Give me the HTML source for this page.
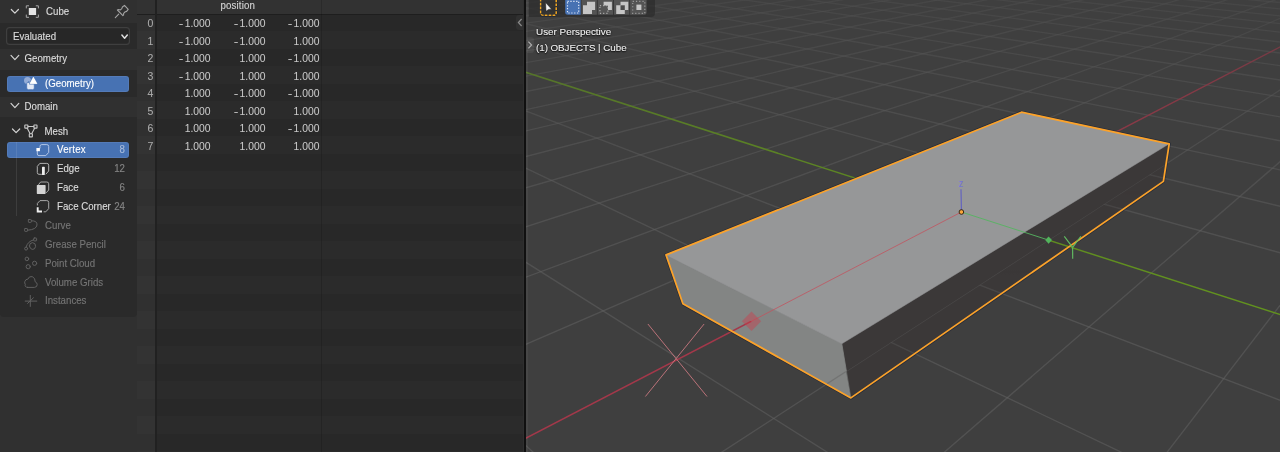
<!DOCTYPE html>
<html><head><meta charset="utf-8"><title>Blender Spreadsheet</title>
<style>
*{box-sizing:border-box;margin:0;padding:0}
html,body{width:1280px;height:452px;overflow:hidden;background:#303030}
body{position:relative;font-family:"Liberation Sans",sans-serif;font-size:9.7px;color:#dddddd;-webkit-font-smoothing:antialiased}
.abs{position:absolute}
.side{will-change:transform;position:absolute;left:0;top:0;width:137px;height:452px;background:#303030}
.pc{position:absolute;left:0;width:137px;background:#2a2a2a}
.t{position:absolute;white-space:nowrap;line-height:12px;height:12px;-webkit-text-stroke:.12px;transform:scaleY(1.06);transform-origin:0 9.2px}
.btn{position:absolute;left:7px;width:122px;height:16px;background:#4772b3;border-radius:3px;box-shadow:inset 0 0 0 1px rgba(255,255,255,.07)}
.dd{position:absolute;left:6px;top:27.3px;width:124px;height:18px;background:#272727;box-shadow:inset 0 0 0 1.2px #3f3f3f;border-radius:3.5px}
.dim{color:#757575}
.num{color:#858585}
svg{position:absolute;overflow:visible}
.sheet{will-change:transform;position:absolute;left:137px;top:0;width:388px;height:452px;background:#282828}
.row{position:absolute;left:0;width:388px;height:17.5px}
.idx{position:absolute;left:0;top:0;width:19.5px;height:452px;background:rgba(255,255,255,.04)}
.cell{position:absolute;text-align:right;white-space:nowrap;line-height:12px;color:#cacaca;font-size:10.3px;-webkit-text-stroke:.05px}
.m{display:inline-block;transform:scaleX(1.35);transform-origin:100% 50%;margin-right:.9px}
.vp{left:526px;top:0;overflow:hidden}
.vt{transform:none;will-change:transform;color:#f2f2f2;font-size:9.9px;text-shadow:0 0 1.5px #000,0 .5px 1.5px rgba(0,0,0,.9)}
</style></head><body>
<!-- SIDEBAR -->
<div class="side">
 <div class="pc" style="top:23px;height:26px"></div>
 <div class="pc" style="top:70px;height:26.5px"></div>
 <div class="pc" style="top:116.5px;height:200.5px;border-radius:0 0 4px 4px"></div>
 <!-- header -->
 <div class="t" style="left:46px;top:5.8px">Cube</div>
 <div class="dd"></div>
 <div class="t" style="left:13px;top:31.0px">Evaluated</div>
 <div class="t" style="left:24.5px;top:52.8px">Geometry</div>
 <div class="btn" style="top:75.5px"></div>
 <div class="t" style="left:45px;top:77.9px;color:#fff">(Geometry)</div>
 <div class="t" style="left:24.5px;top:100.8px">Domain</div>
 <div class="t" style="left:44.5px;top:125.6px">Mesh</div>
 <div class="btn" style="top:142px"></div>
 <div class="abs" style="left:15.8px;top:142px;width:1px;height:74px;background:rgba(255,255,255,.09)"></div>
 <div class="t" style="left:57px;top:144.4px;color:#fff;letter-spacing:.25px">Vertex</div>
 <div class="t" style="left:57px;top:163.2px">Edge</div>
 <div class="t" style="left:57px;top:181.9px">Face</div>
 <div class="t" style="left:57px;top:200.7px">Face Corner</div>
 <div class="t num" style="right:12px;top:144.4px;color:#a9bcdb">8</div>
 <div class="t num" style="right:12px;top:163.2px">12</div>
 <div class="t num" style="right:12px;top:181.9px">6</div>
 <div class="t num" style="right:12px;top:200.7px">24</div>
 <div class="t dim" style="left:45px;top:220.1px">Curve</div>
 <div class="t dim" style="left:45px;top:238.9px">Grease Pencil</div>
 <div class="t dim" style="left:45px;top:257.6px">Point Cloud</div>
 <div class="t dim" style="left:45px;top:276.6px">Volume Grids</div>
 <div class="t dim" style="left:45px;top:295.2px">Instances</div>
<svg style="left:0;top:0" width="137" height="452" viewBox="0 0 137 452" fill="none" stroke-linecap="round" stroke-linejoin="round">
 <!-- chevrons -->
 <g stroke="#d2d2d2" stroke-width="1.2">
  <path d="M11.3 9.5 L14.85 13.2 L18.4 9.5"/>
  <path d="M11 55.4 L14.9 59.6 L18.8 55.4"/>
  <path d="M11 103.4 L14.9 107.6 L18.8 103.4"/>
  <path d="M12.5 129 L16.1 132.6 L19.7 129"/>
  <path d="M121.9 35.1 L124.6 38.3 L127.3 35.1" stroke-width="1.5" stroke="#e0e0e0"/>
 </g>
 <!-- object icon -->
 <rect x="28.8" y="8" width="7.3" height="7" fill="#e4e4e4" stroke="none"/>
 <g stroke="#a8a8a8" stroke-width="1">
  <path d="M26.3 8 V5.8 H28.6 M36.2 5.8 H38.4 V8 M38.4 15 V17.3 H36.2 M28.6 17.3 H26.3 V15"/>
 </g>
 <!-- pin -->
 <g stroke="#a4a4a4" stroke-width="1.1">
  <path d="M115.3 17.6 L118.7 14.2"/>
  <path d="M117.4 10 L122.9 15.6 Q124 15.2 123.6 13.6 Q124.6 11.6 126.6 11.4 L128.2 9.3 L124.5 5.4 L122.4 7 Q122.2 9 120.2 9.9 Q118.4 9.2 117.4 10 Z"/>
 </g>
 <!-- geometry icon -->
 <circle cx="27.5" cy="80.4" r="3.5" fill="#93abd6" stroke="none"/>
 <rect x="26.7" y="82.1" width="7.6" height="7.6" rx="1.7" fill="#e3e9f5" stroke="#4772b3" stroke-width=".8"/>
 <path d="M33.5 76.6 L37.6 84 H29.6 Z" fill="#fff" stroke="#4772b3" stroke-width=".9"/>
 <path d="M33.5 77.6 L36.8 83.6 H30.3 Z" fill="#fff" stroke="#fff" stroke-width=".6"/>
 <!-- mesh icon -->
 <g stroke="#cacaca" stroke-width="1.1">
  <path d="M28 126.5 H33.8 M27.2 128.2 L30 133.6 M34.6 128.2 L31.8 133.6"/>
  <rect x="24.8" y="125" width="3.1" height="3.1" rx=".4"/>
  <rect x="33.9" y="125" width="3.1" height="3.1" rx=".4"/>
  <rect x="29.3" y="133.8" width="3.1" height="3.1" rx=".4"/>
 </g>
 <!-- vertex -->
 <path d="M40 148 V146.4 Q40 144.6 41.8 144.6 H46.8 Q48.7 144.6 48.7 146.5 V152.4 L45.8 155.6 H39 Q37.3 155.6 37.3 154 V151.2" stroke="#b4c6e6" stroke-width="1"/>
 <rect x="36.4" y="148" width="3.5" height="3.2" fill="#fff" stroke="none"/>
 <!-- edge -->
 <path d="M41.5 174.3 H39 Q37.3 174.3 37.3 172.6 V166.4 L39.8 163.4 H46.8 Q48.7 163.4 48.7 165.2 V171 L46 174" stroke="#b0b0b0" stroke-width="1"/>
 <rect x="42" y="166.8" width="2.8" height="8.2" rx=".6" fill="#ededed" stroke="none"/>
 <!-- face -->
 <path d="M38.6 184.6 L40.6 182 H46.8 Q48.7 182 48.7 183.8 V190 L46.4 192.6" stroke="#a6a6a6" stroke-width="1"/>
 <rect x="36.8" y="185.1" width="8.8" height="8.8" rx=".6" fill="#d4d4d4" stroke="none"/>
 <!-- face corner -->
 <path d="M37.4 205 V203.4 L40 200.6 H46.8 Q48.7 200.6 48.7 202.4 V208.6 L45.8 211.8 H44" stroke="#a6a6a6" stroke-width="1"/>
 <path d="M37.7 207.2 V211.5 H42" stroke="#f0f0f0" stroke-width="1.9" stroke-linecap="butt" stroke-linejoin="miter"/>
 <!-- dim icons -->
 <g stroke="#606060" stroke-width="1">
  <!-- curve -->
  <rect x="28.4" y="219.5" width="2.9" height="2.9" rx=".6"/>
  <rect x="24.6" y="228.5" width="2.9" height="2.9" rx=".6"/>
  <path d="M31.5 220.8 Q37.4 220.6 37 225 Q36.4 229.6 27.8 230.2"/>
  <!-- grease pencil -->
  <rect x="33.7" y="238" width="2.9" height="2.9" rx=".6"/>
  <circle cx="26.1" cy="248.6" r="1.5"/>
  <path d="M33.6 239.8 Q27.4 241.6 26.2 246.9 M29.4 246 Q29.4 242.8 32.4 242.6 Q35.8 242.8 35.6 246.4 Q35 249.8 32.2 249.4 Q29.8 248.8 29.4 246"/>
  <!-- point cloud -->
  <circle cx="26.9" cy="258.9" r="1.8"/>
  <circle cx="34.6" cy="263.3" r="2.1"/>
  <circle cx="28.2" cy="266.7" r="2.1"/>
  <!-- volume -->
  <path d="M27.6 287.4 H34.4 Q37.3 287.2 37.2 284.5 Q37.1 282.4 35.2 281.8 Q35.4 278 32.2 276.6 Q29 275.9 27.8 279.2 Q25.6 279 24.9 281.4 Q24.2 283 25.3 284.3 Q24.4 287.2 27.6 287.4 Z"/>
  <!-- instances -->
  <path d="M25.2 301.1 H36.8 M30.3 295.4 V306.4 M27.6 303.4 L33.4 297.8"/>
 </g>
</svg>

</div>
<!-- SPREADSHEET -->
<div class="sheet">
<div class="row" style="top:13.7px;background:#282828"></div>
<div class="row" style="top:31.2px;background:#2b2b2b"></div>
<div class="row" style="top:48.7px;background:#282828"></div>
<div class="row" style="top:66.2px;background:#2b2b2b"></div>
<div class="row" style="top:83.7px;background:#282828"></div>
<div class="row" style="top:101.2px;background:#2b2b2b"></div>
<div class="row" style="top:118.7px;background:#282828"></div>
<div class="row" style="top:136.2px;background:#2b2b2b"></div>
<div class="row" style="top:153.7px;background:#282828"></div>
<div class="row" style="top:171.2px;background:#2b2b2b"></div>
<div class="row" style="top:188.7px;background:#282828"></div>
<div class="row" style="top:206.2px;background:#2b2b2b"></div>
<div class="row" style="top:223.7px;background:#282828"></div>
<div class="row" style="top:241.2px;background:#2b2b2b"></div>
<div class="row" style="top:258.7px;background:#282828"></div>
<div class="row" style="top:276.2px;background:#2b2b2b"></div>
<div class="row" style="top:293.7px;background:#282828"></div>
<div class="row" style="top:311.2px;background:#2b2b2b"></div>
<div class="row" style="top:328.7px;background:#282828"></div>
<div class="row" style="top:346.2px;background:#2b2b2b"></div>
<div class="row" style="top:363.7px;background:#282828"></div>
<div class="row" style="top:381.2px;background:#2b2b2b"></div>
<div class="row" style="top:398.7px;background:#282828"></div>
<div class="row" style="top:416.2px;background:#2b2b2b"></div>
<div class="row" style="top:433.7px;background:#282828"></div>
<div class="row" style="top:451.2px;background:#2b2b2b"></div>

 <div class="idx"></div>
 <div class="abs" style="left:0;top:0;width:388px;height:14px;background:#323232"></div>
 <div class="abs" style="left:0;top:13.8px;width:388px;height:1.3px;background:#1e1e1e"></div>
 <div class="abs" style="left:18.1px;top:0;width:1.5px;height:452px;background:#212121"></div>
 <div class="abs" style="left:184.2px;top:0;width:1.3px;height:452px;background:rgba(0,0,0,.15)"></div>
 <div class="t" style="left:83.5px;top:-.2px;color:#d4d4d4;letter-spacing:.15px">position</div>
<div class="cell" style="left:0;width:16.4px;top:17.1px;color:#adadad;font-size:10.5px">0</div><div class="cell" style="left:23.5px;width:50px;top:18.1px"><span class="m">-</span>1.000</div><div class="cell" style="left:78.4px;width:50px;top:18.1px"><span class="m">-</span>1.000</div><div class="cell" style="left:132.4px;width:50px;top:18.1px"><span class="m">-</span>1.000</div>
<div class="cell" style="left:0;width:16.4px;top:34.6px;color:#adadad;font-size:10.5px">1</div><div class="cell" style="left:23.5px;width:50px;top:35.6px"><span class="m">-</span>1.000</div><div class="cell" style="left:78.4px;width:50px;top:35.6px"><span class="m">-</span>1.000</div><div class="cell" style="left:132.4px;width:50px;top:35.6px">1.000</div>
<div class="cell" style="left:0;width:16.4px;top:52.1px;color:#adadad;font-size:10.5px">2</div><div class="cell" style="left:23.5px;width:50px;top:53.1px"><span class="m">-</span>1.000</div><div class="cell" style="left:78.4px;width:50px;top:53.1px">1.000</div><div class="cell" style="left:132.4px;width:50px;top:53.1px"><span class="m">-</span>1.000</div>
<div class="cell" style="left:0;width:16.4px;top:69.6px;color:#adadad;font-size:10.5px">3</div><div class="cell" style="left:23.5px;width:50px;top:70.6px"><span class="m">-</span>1.000</div><div class="cell" style="left:78.4px;width:50px;top:70.6px">1.000</div><div class="cell" style="left:132.4px;width:50px;top:70.6px">1.000</div>
<div class="cell" style="left:0;width:16.4px;top:87.1px;color:#adadad;font-size:10.5px">4</div><div class="cell" style="left:23.5px;width:50px;top:88.1px">1.000</div><div class="cell" style="left:78.4px;width:50px;top:88.1px"><span class="m">-</span>1.000</div><div class="cell" style="left:132.4px;width:50px;top:88.1px"><span class="m">-</span>1.000</div>
<div class="cell" style="left:0;width:16.4px;top:104.6px;color:#adadad;font-size:10.5px">5</div><div class="cell" style="left:23.5px;width:50px;top:105.6px">1.000</div><div class="cell" style="left:78.4px;width:50px;top:105.6px"><span class="m">-</span>1.000</div><div class="cell" style="left:132.4px;width:50px;top:105.6px">1.000</div>
<div class="cell" style="left:0;width:16.4px;top:122.1px;color:#adadad;font-size:10.5px">6</div><div class="cell" style="left:23.5px;width:50px;top:123.1px">1.000</div><div class="cell" style="left:78.4px;width:50px;top:123.1px">1.000</div><div class="cell" style="left:132.4px;width:50px;top:123.1px"><span class="m">-</span>1.000</div>
<div class="cell" style="left:0;width:16.4px;top:139.6px;color:#adadad;font-size:10.5px">7</div><div class="cell" style="left:23.5px;width:50px;top:140.6px">1.000</div><div class="cell" style="left:78.4px;width:50px;top:140.6px">1.000</div><div class="cell" style="left:132.4px;width:50px;top:140.6px">1.000</div>

 <div class="abs" style="left:379.2px;top:14.8px;width:7px;height:15.2px;background:#303030;border-radius:3px 0 0 3px"></div>
 <svg style="left:380.4px;top:18.3px" width="6" height="9" viewBox="0 0 6 9"><path d="M4.6 1 L1.4 4.5 L4.6 8" fill="none" stroke="#8a8a8a" stroke-width="1.2"/></svg>
</div>
<div class="abs" style="left:522.8px;top:0;width:1.6px;height:452px;background:#2f2f2f"></div><div class="abs" style="left:524.3px;top:0;width:1.9px;height:452px;background:#101010"></div>

<svg class="vp" width="754" height="452" viewBox="0 0 754 452">
<defs>
<linearGradient id="fade" x1="0" y1="0" x2="0" y2="452" gradientUnits="userSpaceOnUse">
<stop offset="0" stop-color="#fff" stop-opacity=".42"/><stop offset=".18" stop-color="#fff" stop-opacity=".66"/><stop offset=".4" stop-color="#fff" stop-opacity=".86"/><stop offset=".65" stop-color="#fff" stop-opacity="1"/>
</linearGradient>
<mask id="fm" maskUnits="userSpaceOnUse" x="0" y="0" width="754" height="452"><rect width="754" height="452" fill="url(#fade)"/></mask>
<clipPath id="outside"><path clip-rule="evenodd" d="M0 0 H754 V452 H0 Z M140.0,254.9 L495.5,112.2 L643.2,143.8 L637.4,181.4 L324.9,397.9 L156.9,303.8 Z"/></clipPath>
<clipPath id="below"><path clip-rule="evenodd" d="M0 0 H754 V452 H0 Z M140.0,254.9 L495.5,112.2 L643.2,143.8 L640.4,163.8 L320.0,371.6 L148.1,280.2 Z"/></clipPath>
</defs>
<rect width="754" height="452" fill="#3f3f3f"/>
<polygon points="315.8,343.8 643.2,143.8 637.4,181.4 324.9,397.9" fill="#3b3838" stroke="#3b3838" stroke-width=".8"/>
<polygon points="140.0,254.9 315.8,343.8 324.9,397.9 156.9,303.8" fill="#838584" stroke="#838584" stroke-width=".8"/>
<polygon points="140.0,254.9 495.5,112.2 643.2,143.8 315.8,343.8" fill="#969798" stroke="#969798" stroke-width=".5"/>
<g clip-path="url(#below)">
<g mask="url(#fm)">
<g stroke="#646464" stroke-opacity=".52" stroke-width="1.35" fill="none">
<line x1="359.8" y1="-95.8" x2="3975.4" y2="12.3"/>
<line x1="359.8" y1="-95.8" x2="-210189.9" y2="8246.4"/>
<line x1="353.5" y1="-95.5" x2="4098.5" y2="18.2"/>
<line x1="366.3" y1="-95.6" x2="-206939.1" y2="8247.2"/>
<line x1="347.0" y1="-95.3" x2="4232.6" y2="24.5"/>
<line x1="372.8" y1="-95.4" x2="-203688.4" y2="8248.0"/>
<line x1="340.5" y1="-95.0" x2="4379.2" y2="31.4"/>
<line x1="379.4" y1="-95.2" x2="-200437.7" y2="8248.8"/>
<line x1="333.8" y1="-94.8" x2="4540.0" y2="39.1"/>
<line x1="386.1" y1="-95.0" x2="-197187.0" y2="8249.6"/>
<line x1="327.0" y1="-94.5" x2="4717.4" y2="47.5"/>
<line x1="392.9" y1="-94.8" x2="-193936.2" y2="8250.4"/>
<line x1="320.0" y1="-94.2" x2="4914.0" y2="56.8"/>
<line x1="399.8" y1="-94.6" x2="-190685.5" y2="8251.1"/>
<line x1="313.0" y1="-93.9" x2="5133.1" y2="67.1"/>
<line x1="406.8" y1="-94.4" x2="-187434.8" y2="8251.9"/>
<line x1="305.8" y1="-93.6" x2="5378.8" y2="78.8"/>
<line x1="413.8" y1="-94.2" x2="-184184.0" y2="8252.7"/>
<line x1="298.5" y1="-93.4" x2="5656.3" y2="91.9"/>
<line x1="421.0" y1="-94.0" x2="-180933.3" y2="8253.5"/>
<line x1="291.0" y1="-93.1" x2="5972.1" y2="106.8"/>
<line x1="428.3" y1="-93.7" x2="-177682.6" y2="8254.3"/>
<line x1="283.4" y1="-92.8" x2="6334.7" y2="124.0"/>
<line x1="435.7" y1="-93.5" x2="-174431.8" y2="8255.1"/>
<line x1="275.6" y1="-92.5" x2="6755.4" y2="143.9"/>
<line x1="443.1" y1="-93.3" x2="-171181.1" y2="8255.9"/>
<line x1="267.7" y1="-92.1" x2="7249.5" y2="167.3"/>
<line x1="450.7" y1="-93.1" x2="-167930.4" y2="8256.6"/>
<line x1="259.6" y1="-91.8" x2="7837.9" y2="195.2"/>
<line x1="458.4" y1="-92.8" x2="-164679.7" y2="8257.4"/>
<line x1="251.4" y1="-91.5" x2="8550.5" y2="228.9"/>
<line x1="466.3" y1="-92.6" x2="-161428.9" y2="8258.2"/>
<line x1="243.0" y1="-91.2" x2="9431.2" y2="270.6"/>
<line x1="474.2" y1="-92.4" x2="-158178.2" y2="8259.0"/>
<line x1="234.5" y1="-90.8" x2="10547.5" y2="323.5"/>
<line x1="482.2" y1="-92.1" x2="-154927.5" y2="8259.8"/>
<line x1="225.7" y1="-90.5" x2="12008.4" y2="392.6"/>
<line x1="490.4" y1="-91.9" x2="-151676.7" y2="8260.6"/>
<line x1="216.8" y1="-90.1" x2="14002.9" y2="487.0"/>
<line x1="498.7" y1="-91.6" x2="-148426.0" y2="8261.3"/>
<line x1="207.7" y1="-89.8" x2="16888.3" y2="623.6"/>
<line x1="507.1" y1="-91.4" x2="-145175.3" y2="8262.1"/>
<line x1="198.4" y1="-89.4" x2="21433.4" y2="838.8"/>
<line x1="515.6" y1="-91.1" x2="-141924.5" y2="8262.9"/>
<line x1="188.9" y1="-89.0" x2="29648.4" y2="1227.7"/>
<line x1="524.3" y1="-90.9" x2="-138673.8" y2="8263.7"/>
<line x1="179.2" y1="-88.6" x2="48987.2" y2="2143.2"/>
<line x1="533.1" y1="-90.6" x2="-135423.1" y2="8264.5"/>
<line x1="169.3" y1="-88.2" x2="149408.5" y2="6897.2"/>
<line x1="542.0" y1="-90.3" x2="-132172.4" y2="8265.3"/>
<line x1="159.1" y1="-87.8" x2="175952.3" y2="8339.6"/>
<line x1="551.1" y1="-90.1" x2="-128921.6" y2="8266.0"/>
<line x1="148.8" y1="-87.4" x2="171657.6" y2="8338.5"/>
<line x1="560.4" y1="-89.8" x2="-125670.9" y2="8266.8"/>
<line x1="138.2" y1="-87.0" x2="167362.9" y2="8337.5"/>
<line x1="569.7" y1="-89.5" x2="-122420.2" y2="8267.6"/>
<line x1="127.3" y1="-86.6" x2="163068.2" y2="8336.5"/>
<line x1="579.2" y1="-89.2" x2="-119169.4" y2="8268.4"/>
<line x1="116.2" y1="-86.1" x2="158773.5" y2="8335.4"/>
<line x1="588.9" y1="-88.9" x2="-115918.7" y2="8269.2"/>
<line x1="104.9" y1="-85.7" x2="154478.8" y2="8334.4"/>
<line x1="598.8" y1="-88.6" x2="-112668.0" y2="8270.0"/>
<line x1="93.3" y1="-85.2" x2="150184.1" y2="8333.4"/>
<line x1="608.8" y1="-88.3" x2="-109417.2" y2="8270.7"/>
<line x1="81.4" y1="-84.8" x2="145889.4" y2="8332.3"/>
<line x1="618.9" y1="-88.0" x2="-106166.5" y2="8271.5"/>
<line x1="69.2" y1="-84.3" x2="141594.7" y2="8331.3"/>
<line x1="629.3" y1="-87.7" x2="-102915.8" y2="8272.3"/>
<line x1="56.7" y1="-83.8" x2="137300.0" y2="8330.2"/>
<line x1="639.8" y1="-87.4" x2="-99665.1" y2="8273.1"/>
<line x1="43.9" y1="-83.3" x2="133005.3" y2="8329.2"/>
<line x1="650.5" y1="-87.1" x2="-96414.3" y2="8273.9"/>
<line x1="30.7" y1="-82.7" x2="128710.5" y2="8328.2"/>
<line x1="661.3" y1="-86.8" x2="-93163.6" y2="8274.7"/>
<line x1="17.3" y1="-82.2" x2="124415.8" y2="8327.1"/>
<line x1="672.4" y1="-86.4" x2="-89912.9" y2="8275.4"/>
<line x1="3.5" y1="-81.7" x2="120121.1" y2="8326.1"/>
<line x1="683.7" y1="-86.1" x2="-86662.1" y2="8276.2"/>
<line x1="-10.7" y1="-81.1" x2="115826.4" y2="8325.1"/>
<line x1="695.1" y1="-85.8" x2="-83411.4" y2="8277.0"/>
<line x1="-25.3" y1="-80.5" x2="111531.7" y2="8324.0"/>
<line x1="706.8" y1="-85.4" x2="-80160.7" y2="8277.8"/>
<line x1="-40.2" y1="-79.9" x2="107237.0" y2="8323.0"/>
<line x1="718.6" y1="-85.1" x2="-76910.0" y2="8278.6"/>
<line x1="-55.5" y1="-79.3" x2="102942.3" y2="8322.0"/>
<line x1="730.7" y1="-84.7" x2="-73659.2" y2="8279.4"/>
<line x1="-71.3" y1="-78.7" x2="98647.6" y2="8320.9"/>
<line x1="743.0" y1="-84.3" x2="-70408.5" y2="8280.2"/>
<line x1="-87.5" y1="-78.1" x2="94352.9" y2="8319.9"/>
<line x1="755.5" y1="-84.0" x2="-67157.8" y2="8280.9"/>
<line x1="-104.2" y1="-77.4" x2="90058.2" y2="8318.9"/>
<line x1="768.3" y1="-83.6" x2="-63907.0" y2="8281.7"/>
<line x1="-121.4" y1="-76.7" x2="85763.5" y2="8317.8"/>
<line x1="781.3" y1="-83.2" x2="-60656.3" y2="8282.5"/>
<line x1="-139.0" y1="-76.0" x2="81468.8" y2="8316.8"/>
<line x1="794.6" y1="-82.8" x2="-57405.6" y2="8283.3"/>
<line x1="-157.2" y1="-75.3" x2="77174.1" y2="8315.7"/>
<line x1="808.1" y1="-82.4" x2="-54154.8" y2="8284.1"/>
<line x1="-175.9" y1="-74.6" x2="72879.4" y2="8314.7"/>
<line x1="821.8" y1="-82.0" x2="-50904.1" y2="8284.9"/>
<line x1="-195.2" y1="-73.8" x2="68584.7" y2="8313.7"/>
<line x1="835.9" y1="-81.6" x2="-47653.4" y2="8285.6"/>
<line x1="-215.1" y1="-73.0" x2="64290.0" y2="8312.6"/>
<line x1="850.2" y1="-81.1" x2="-44402.7" y2="8286.4"/>
<line x1="-235.7" y1="-72.2" x2="59995.3" y2="8311.6"/>
<line x1="864.8" y1="-80.7" x2="-41151.9" y2="8287.2"/>
<line x1="-256.9" y1="-71.4" x2="55700.6" y2="8310.6"/>
<line x1="879.7" y1="-80.2" x2="-37901.2" y2="8288.0"/>
<line x1="-278.7" y1="-70.5" x2="51405.9" y2="8309.5"/>
<line x1="894.9" y1="-79.8" x2="-34650.5" y2="8288.8"/>
<line x1="-301.4" y1="-69.6" x2="47111.1" y2="8308.5"/>
<line x1="910.4" y1="-79.3" x2="-31399.7" y2="8289.6"/>
<line x1="-324.7" y1="-68.7" x2="42816.4" y2="8307.5"/>
<line x1="926.2" y1="-78.9" x2="-28149.0" y2="8290.3"/>
<line x1="-348.9" y1="-67.7" x2="38521.7" y2="8306.4"/>
<line x1="942.4" y1="-78.4" x2="-24898.3" y2="8291.1"/>
<line x1="-373.9" y1="-66.7" x2="34227.0" y2="8305.4"/>
<line x1="958.9" y1="-77.9" x2="-21647.5" y2="8291.9"/>
<line x1="-399.8" y1="-65.7" x2="29932.3" y2="8304.4"/>
<line x1="975.7" y1="-77.4" x2="-18396.8" y2="8292.7"/>
<line x1="-454.5" y1="-63.5" x2="21342.9" y2="8302.3"/>
<line x1="1010.5" y1="-76.3" x2="-11895.4" y2="8294.3"/>
<line x1="-483.4" y1="-62.4" x2="17048.2" y2="8301.2"/>
<line x1="1028.5" y1="-75.8" x2="-8644.6" y2="8295.0"/>
<line x1="-513.4" y1="-61.2" x2="12753.5" y2="8300.2"/>
<line x1="1046.9" y1="-75.2" x2="-5393.9" y2="8295.8"/>
<line x1="-544.5" y1="-60.0" x2="8458.8" y2="8299.2"/>
<line x1="1065.7" y1="-74.7" x2="-2143.2" y2="8296.6"/>
<line x1="-576.9" y1="-58.7" x2="4164.1" y2="8298.1"/>
<line x1="1085.0" y1="-74.1" x2="1107.6" y2="8297.4"/>
<line x1="-610.6" y1="-57.3" x2="-130.6" y2="8297.1"/>
<line x1="1104.7" y1="-73.5" x2="4358.3" y2="8298.2"/>
<line x1="-645.7" y1="-55.9" x2="-4425.3" y2="8296.1"/>
<line x1="1124.8" y1="-72.9" x2="7609.0" y2="8299.0"/>
<line x1="-682.3" y1="-54.5" x2="-8720.0" y2="8295.0"/>
<line x1="1145.4" y1="-72.3" x2="10859.8" y2="8299.8"/>
<line x1="-720.4" y1="-53.0" x2="-13014.7" y2="8294.0"/>
<line x1="1166.5" y1="-71.7" x2="14110.5" y2="8300.5"/>
<line x1="-760.3" y1="-51.4" x2="-17309.4" y2="8293.0"/>
<line x1="1188.2" y1="-71.0" x2="17361.2" y2="8301.3"/>
<line x1="-801.9" y1="-49.8" x2="-21604.1" y2="8291.9"/>
<line x1="1210.3" y1="-70.4" x2="20611.9" y2="8302.1"/>
<line x1="-845.5" y1="-48.0" x2="-25898.8" y2="8290.9"/>
<line x1="1233.0" y1="-69.7" x2="23862.7" y2="8302.9"/>
<line x1="-891.1" y1="-46.2" x2="-30193.5" y2="8289.9"/>
<line x1="1256.3" y1="-69.0" x2="27113.4" y2="8303.7"/>
<line x1="-939.0" y1="-44.3" x2="-34488.2" y2="8288.8"/>
<line x1="1280.2" y1="-68.3" x2="30364.1" y2="8304.5"/>
<line x1="-989.2" y1="-42.3" x2="-38783.0" y2="8287.8"/>
<line x1="1304.7" y1="-67.5" x2="33614.9" y2="8305.2"/>
<line x1="-1041.9" y1="-40.2" x2="-43077.7" y2="8286.7"/>
<line x1="1329.9" y1="-66.8" x2="36865.6" y2="8306.0"/>
<line x1="-1097.5" y1="-38.0" x2="-47372.4" y2="8285.7"/>
<line x1="1355.7" y1="-66.0" x2="40116.3" y2="8306.8"/>
<line x1="-1156.0" y1="-35.7" x2="-51667.1" y2="8284.7"/>
<line x1="1382.2" y1="-65.2" x2="43367.1" y2="8307.6"/>
<line x1="-1217.7" y1="-33.3" x2="-55961.8" y2="8283.6"/>
<line x1="1409.4" y1="-64.4" x2="46617.8" y2="8308.4"/>
<line x1="-1282.9" y1="-30.7" x2="-60256.5" y2="8282.6"/>
<line x1="1437.4" y1="-63.6" x2="49868.5" y2="8309.2"/>
<line x1="-1351.9" y1="-28.0" x2="-64551.2" y2="8281.6"/>
<line x1="1466.1" y1="-62.7" x2="53119.2" y2="8309.9"/>
<line x1="-1425.1" y1="-25.1" x2="-68845.9" y2="8280.5"/>
<line x1="1495.7" y1="-61.8" x2="56370.0" y2="8310.7"/>
<line x1="-1502.8" y1="-22.0" x2="-73140.6" y2="8279.5"/>
<line x1="1526.1" y1="-60.9" x2="59620.7" y2="8311.5"/>
<line x1="-1585.4" y1="-18.7" x2="-77435.3" y2="8278.5"/>
<line x1="1557.5" y1="-60.0" x2="62871.4" y2="8312.3"/>
<line x1="-1673.5" y1="-15.2" x2="-81730.0" y2="8277.4"/>
<line x1="1589.7" y1="-59.0" x2="66122.2" y2="8313.1"/>
<line x1="-1767.6" y1="-11.5" x2="-86024.7" y2="8276.4"/>
<line x1="1622.9" y1="-58.0" x2="69372.9" y2="8313.9"/>
<line x1="-1868.4" y1="-7.5" x2="-90319.4" y2="8275.4"/>
<line x1="1657.2" y1="-57.0" x2="72623.6" y2="8314.6"/>
<line x1="-1976.5" y1="-3.2" x2="-94614.1" y2="8274.3"/>
<line x1="1692.5" y1="-55.9" x2="75874.3" y2="8315.4"/>
<line x1="-2092.9" y1="1.4" x2="-98908.8" y2="8273.3"/>
<line x1="1728.9" y1="-54.8" x2="79125.1" y2="8316.2"/>
<line x1="-2218.5" y1="6.4" x2="-103203.5" y2="8272.2"/>
<line x1="1766.5" y1="-53.7" x2="82375.8" y2="8317.0"/>
<line x1="-2354.4" y1="11.8" x2="-107498.2" y2="8271.2"/>
<line x1="1805.3" y1="-52.6" x2="85626.5" y2="8317.8"/>
<line x1="-2502.0" y1="17.6" x2="-111792.9" y2="8270.2"/>
<line x1="1845.4" y1="-51.4" x2="88877.3" y2="8318.6"/>
<line x1="-2662.7" y1="24.0" x2="-116087.6" y2="8269.1"/>
<line x1="1886.9" y1="-50.1" x2="92128.0" y2="8319.4"/>
<line x1="-2838.6" y1="30.9" x2="-120382.4" y2="8268.1"/>
<line x1="1929.8" y1="-48.8" x2="95378.7" y2="8320.1"/>
<line x1="-3031.8" y1="38.6" x2="-124677.1" y2="8267.1"/>
<line x1="1974.1" y1="-47.5" x2="98629.5" y2="8320.9"/>
<line x1="-3245.1" y1="47.0" x2="-128971.8" y2="8266.0"/>
<line x1="2020.1" y1="-46.1" x2="101880.2" y2="8321.7"/>
<line x1="-3481.6" y1="56.4" x2="-133266.5" y2="8265.0"/>
<line x1="2067.7" y1="-44.7" x2="105130.9" y2="8322.5"/>
<line x1="-3745.4" y1="66.9" x2="-137561.2" y2="8264.0"/>
<line x1="2117.1" y1="-43.2" x2="108381.6" y2="8323.3"/>
<line x1="-4041.6" y1="78.6" x2="-141855.9" y2="8262.9"/>
<line x1="2168.3" y1="-41.7" x2="111632.4" y2="8324.1"/>
<line x1="-4376.6" y1="91.9" x2="-146150.6" y2="8261.9"/>
<line x1="2221.4" y1="-40.1" x2="114883.1" y2="8324.8"/>
<line x1="-4758.3" y1="107.0" x2="-150445.3" y2="8260.9"/>
<line x1="2276.7" y1="-38.5" x2="118133.8" y2="8325.6"/>
<line x1="-5197.4" y1="124.4" x2="-154740.0" y2="8259.8"/>
<line x1="2334.1" y1="-36.8" x2="121384.6" y2="8326.4"/>
<line x1="-5707.8" y1="144.6" x2="-159034.7" y2="8258.8"/>
<line x1="2393.9" y1="-35.0" x2="124635.3" y2="8327.2"/>
<line x1="-6308.6" y1="168.4" x2="-163329.4" y2="8257.7"/>
<line x1="2456.1" y1="-33.1" x2="127886.0" y2="8328.0"/>
<line x1="-7025.9" y1="196.8" x2="-167624.1" y2="8256.7"/>
<line x1="2521.0" y1="-31.2" x2="131136.8" y2="8328.8"/>
<line x1="-7897.4" y1="231.4" x2="-171918.8" y2="8255.7"/>
<line x1="2588.7" y1="-29.1" x2="134387.5" y2="8329.5"/>
<line x1="-8978.7" y1="274.2" x2="-176213.5" y2="8254.6"/>
<line x1="2659.3" y1="-27.0" x2="137638.2" y2="8330.3"/>
<line x1="-10356.0" y1="328.8" x2="-180508.2" y2="8253.6"/>
<line x1="2733.1" y1="-24.8" x2="140888.9" y2="8331.1"/>
<line x1="-12170.0" y1="400.7" x2="-184802.9" y2="8252.6"/>
<line x1="2810.4" y1="-22.5" x2="144139.7" y2="8331.9"/>
<line x1="-14667.7" y1="499.6" x2="-189097.6" y2="8251.5"/>
<line x1="2891.3" y1="-20.1" x2="147390.4" y2="8332.7"/>
<line x1="-18325.2" y1="644.5" x2="-193392.3" y2="8250.5"/>
<line x1="2976.1" y1="-17.6" x2="150641.1" y2="8333.5"/>
<line x1="-24194.7" y1="877.1" x2="-197687.0" y2="8249.5"/>
<line x1="3065.1" y1="-14.9" x2="153891.9" y2="8334.2"/>
<line x1="-35152.9" y1="1311.3" x2="-201981.8" y2="8248.4"/>
<line x1="3158.6" y1="-12.1" x2="157142.6" y2="8335.0"/>
<line x1="-62881.1" y1="2409.9" x2="-206276.5" y2="8247.4"/>
<line x1="3257.1" y1="-9.2" x2="160393.3" y2="8335.8"/>
<line x1="3360.8" y1="-6.1" x2="163644.1" y2="8336.6"/>
<line x1="3470.1" y1="-2.8" x2="166894.8" y2="8337.4"/>
<line x1="3585.7" y1="0.7" x2="170145.5" y2="8338.2"/>
<line x1="3708.1" y1="4.3" x2="173396.2" y2="8338.9"/>
<line x1="3837.7" y1="8.2" x2="176647.0" y2="8339.7"/>
<line x1="3975.4" y1="12.3" x2="179897.7" y2="8340.5"/>
</g>
<polygon points="320.0,371.6 640.4,163.8 637.4,181.4 324.9,397.9" fill="#3b3838" fill-opacity=".35"/>
<line x1="992.9" y1="-76.9" x2="-15146.1" y2="8293.5" stroke="#a3384a" stroke-width="1.5"/>
<line x1="-426.7" y1="-64.6" x2="25637.6" y2="8303.3" stroke="#62921f" stroke-width="1.5"/>
</g>
</g>
<polygon points="140.0,254.9 495.5,112.2 643.2,143.8 637.4,181.4 324.9,397.9 156.9,303.8" fill="none" stroke="#141e36" stroke-opacity=".6" stroke-width="3.1" stroke-linejoin="round" clip-path="url(#outside)"/>
<polygon points="140.0,254.9 495.5,112.2 643.2,143.8 637.4,181.4 324.9,397.9 156.9,303.8" fill="none" stroke="#fba22a" stroke-width="1.75" stroke-linejoin="round"/>
<!-- object axes -->
<line x1="435.4" y1="212.0" x2="225.3" y2="321.3" stroke="#c4505c" stroke-opacity=".75" stroke-width="1"/>
<line x1="435.4" y1="212.0" x2="522.6" y2="240.1" stroke="#55b560" stroke-opacity=".9" stroke-width="1"/>
<line x1="435.4" y1="212.0" x2="435.0" y2="189.3" stroke="#5656c8" stroke-width=".95"/>
<polygon points="215.9,321.3 225.5,311.6 235.1,321.3 225.5,331.0" fill="rgba(204,62,74,.44)"/>
<polygon points="519.2,240.1 522.6,236.5 526.0,240.1 522.6,243.7" fill="#52b45c"/>
<g stroke="#cf7a82" stroke-opacity=".85" stroke-width="1" fill="none">
<line x1="121.9" y1="324.0" x2="181.0" y2="396.5" /><line x1="178.1" y1="324.0" x2="119.4" y2="396.5" />
</g>
<g stroke="#62bd62" stroke-width="1.15" fill="none">
<line x1="538.3" y1="236.4" x2="546.6" y2="247.4" /><line x1="554.9" y1="236.4" x2="546.6" y2="247.4" /><line x1="546.6" y1="247.4" x2="546.7" y2="258.7" />
</g>
<text transform="translate(435.0 187) scale(.82 1.08)" font-size="10.8" fill="#7474d4" stroke="#7474d4" stroke-width=".15" text-anchor="middle" font-family="Liberation Sans, sans-serif">z</text>
<circle cx="435.4" cy="212.0" r="2.3" fill="#f9a63a" stroke="#2a1a08" stroke-width=".9"/>
</svg>

<!-- VIEWPORT OVERLAYS -->
<div class="abs" style="left:526.2px;top:0;width:2.1px;height:452px;background:rgba(255,255,255,.045)"></div>
<div class="abs" style="left:528.5px;top:0;width:126px;height:17.3px;background:rgba(45,45,45,.72);border-radius:0 0 4px 0"></div>
<svg style="left:526px;top:0" width="140" height="60" viewBox="0 0 140 60">
 <!-- select box tool -->
 <path d="M14.6 -1.2 V12.7 Q14.6 15.2 17.1 15.2 H27.7 Q30.2 15.2 30.2 12.7 V-1.2" fill="none" stroke="#14203a" stroke-width="2.5" stroke-dasharray="2.7 1.2"/>
 <path d="M14.6 -1.2 V12.7 Q14.6 15.2 17.1 15.2 H27.7 Q30.2 15.2 30.2 12.7 V-1.2" fill="none" stroke="#f2a71f" stroke-width="1.55" stroke-dasharray="2.7 1.2"/>
 <path d="M19.6 2.6 L25.6 9.2 L22.6 9.4 L20 11.3 Z" fill="#f4f4f4" stroke="#1a1a1a" stroke-width=".5"/>
 <!-- mode buttons -->
 <path d="M39.2 0 H54.7 V14.7 H41.7 Q39.2 14.7 39.2 12.2 Z" fill="#4772b3"/>
 <rect x="55.5" y="0" width="15.4" height="14.7" fill="#545454"/>
 <rect x="71.7" y="0" width="15.4" height="14.7" fill="#545454"/>
 <rect x="87.9" y="0" width="15.4" height="14.7" fill="#545454"/>
 <path d="M104.1 0 H120.6 V12.2 Q120.6 14.7 118.1 14.7 H104.1 Z" fill="#545454"/>
 <!-- 1: new -->
 <rect x="41.5" y="1.4" width="11.2" height="11.6" fill="none" stroke="#e6ecf8" stroke-width="1.15" stroke-dasharray="1.2 1.7"/>
 <!-- 2: extend -->
 <path d="M61 1.7 H69.1 V10 H66 V13.9 H57 V5.3 H61 Z" fill="#c6c6c6"/>
 <!-- 3: subtract -->
 <rect x="73.9" y="5.7" width="8" height="7.6" fill="none" stroke="#ababab" stroke-width="1.2" stroke-dasharray="1.2 2"/>
 <path d="M77.6 1.7 H85.9 V10 H82 V5.6 H77.6 Z" fill="#c6c6c6"/>
 <!-- 4: difference -->
 <path d="M94.5 1.7 H102.3 V10 H98.8 V13.9 H90.2 V5.3 H94.5 Z" fill="#c6c6c6"/>
 <rect x="94.5" y="5.3" width="4.3" height="4.7" fill="#4c4c4c"/>
 <!-- 5: intersect -->
 <rect x="106.7" y="1.4" width="12.1" height="12" fill="none" stroke="#9c9c9c" stroke-width="1.2" stroke-dasharray="1.2 2.05"/>
 <rect x="110.4" y="4.6" width="5" height="5.4" fill="#c6c6c6"/>
 <!-- region toggle -->
 <path d="M1 37.2 H5.4 Q7.9 37.2 7.9 39.7 V50.5 Q7.9 53 5.4 53 H1 Z" fill="rgba(255,255,255,.06)"/>
 <path d="M2.4 41.6 L5.6 45 L2.4 48.4" fill="none" stroke="#adadad" stroke-width="1.2"/>
</svg>
<div class="t vt" style="left:535.6px;top:26.3px">User Perspective</div>
<div class="t vt" style="left:535.6px;top:41.6px;font-size:9.8px;letter-spacing:-.04px">(1) OBJECTS | Cube</div>
</body></html>
